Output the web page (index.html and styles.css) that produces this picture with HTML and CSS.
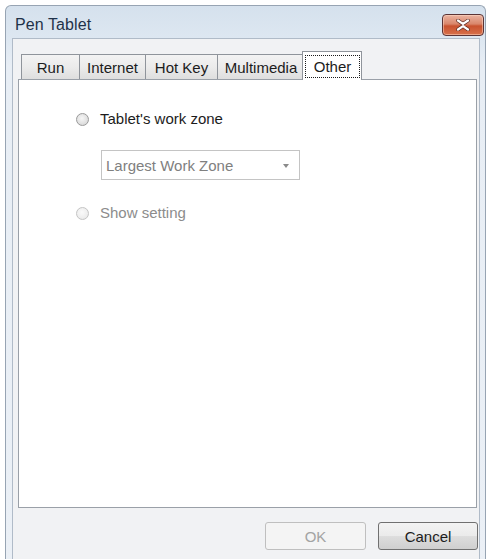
FILE: index.html
```html
<!DOCTYPE html>
<html lang="en">
<head>
<meta charset="utf-8">
<title>Pen Tablet</title>
<link rel="stylesheet" href="styles.css">
</head>
<body>
<div class="window">
  <div class="titlebar">
    <span class="title">Pen Tablet</span>
    <button class="close" aria-label="Close">
      <svg width="16" height="12" viewBox="0 0 16 12">
        <path d="M3 1.5 L8 5 L13 1.5 M3 10.5 L8 7 L13 10.5" fill="none" stroke="#5a2a22" stroke-width="3.6" stroke-linecap="round"/>
        <path d="M3 1.5 L8 5 L13 1.5 M3 10.5 L8 7 L13 10.5" fill="none" stroke="#ffffff" stroke-width="2.2" stroke-linecap="round"/>
      </svg>
    </button>
  </div>
  <div class="frame">
    <div class="client">
      <div class="tabs">
        <div class="tab tab-run">Run</div>
        <div class="tab tab-internet">Internet</div>
        <div class="tab tab-hotkey">Hot Key</div>
        <div class="tab tab-multimedia">Multimedia</div>
        <div class="tab tab-other active"><span class="focus">Other</span></div>
      </div>
      <div class="panel">
        <div class="option">
          <span class="radio"></span>
          <span class="label">Tablet's work zone</span>
        </div>
        <div class="select">
          <span class="select-text">Largest Work Zone</span>
          <span class="arrow"></span>
        </div>
        <div class="option option-disabled">
          <span class="radio"></span>
          <span class="label">Show setting</span>
        </div>
      </div>
      <div class="buttons">
        <button class="btn btn-disabled">OK</button>
        <button class="btn">Cancel</button>
      </div>
    </div>
  </div>
</div>
</body>
</html>
```
FILE: styles.css
```css
html, body {
  margin: 0;
  padding: 0;
  background: #ffffff;
  height: 559px;
  overflow: hidden;
}

body {
  font-family: "Liberation Sans", Arial, sans-serif;
  font-size: 15px;
  color: #1c1c1c;
}

/* window chrome */
.window {
  margin: 5px 4px 0 5px;
  height: 580px;
  border: 1px solid #97a4b3;
  border-bottom: none;
  border-radius: 6px 6px 0 0;
  background: linear-gradient(to bottom, #d5e1ed 0px, #dde7f1 32px, #e8eef5 60px, #ebf0f6 100%);
  display: flex;
  flex-direction: column;
}

.titlebar {
  height: 32px;
  display: flex;
  align-items: flex-start;
  justify-content: space-between;
  padding: 0 1px 0 9px;
  flex: none;
}

.title {
  margin-top: 9px;
  line-height: 20px;
  font-size: 16px;
  color: #1f3249;
  letter-spacing: 0.1px;
}

.close {
  margin-top: 8px;
  width: 42px;
  height: 22px;
  padding: 0;
  border: 1px solid #5b3436;
  border-radius: 4px;
  background: linear-gradient(to bottom, #ebb4a2 0%, #d9866b 45%, #c9522f 55%, #d7714c 100%);
  box-shadow: inset 0 0 0 1px rgba(255, 220, 200, 0.5);
  display: flex;
  align-items: center;
  justify-content: center;
}

.frame {
  flex: 1;
  padding: 0 5px 0 6px;
  display: flex;
}

.client {
  flex: 1;
  border: 1px solid #b0bbc8;
  border-bottom: none;
  background: #f1f2f4;
  padding: 12px 2px 0 5px;
  display: flex;
  flex-direction: column;
}

/* tab strip */
.tabs {
  display: flex;
  align-items: flex-end;
  height: 28px;
  padding-left: 3px;
  position: relative;
  z-index: 1;
}

.tab {
  height: 25px;
  box-sizing: border-box;
  border: 1px solid #8f949b;
  border-bottom: none;
  background: linear-gradient(to bottom, #f3f3f3 0%, #ebebeb 50%, #dedede 100%);
  display: flex;
  align-items: center;
  justify-content: center;
  padding-top: 1px;
  color: #1c1c1c;
}

.tab + .tab { margin-left: -1px; }

.tab-run { width: 59px; }
.tab-internet { width: 67px; }
.tab-hotkey { width: 73px; }
.tab-multimedia { width: 88px; }

.tab.active {
  margin-left: -3px;
  width: 60px;
  height: 29px;
  margin-bottom: -1px;
  background: #ffffff;
  padding: 3px 1px 2px 2px;
  align-items: stretch;
  position: relative;
}

.focus {
  flex: 1;
  border: 1px dotted #1a1a1a;
  display: flex;
  align-items: center;
  justify-content: center;
}

/* tab page */
.panel {
  height: 429px;
  box-sizing: border-box;
  border: 1px solid #9aa0a8;
  background: #ffffff;
  display: flex;
  flex-direction: column;
  align-items: flex-start;
}

.option {
  display: flex;
  align-items: center;
  gap: 11px;
  margin-left: 57px;
  margin-top: 30px;
  line-height: 18px;
}

.radio {
  width: 13px;
  height: 13px;
  box-sizing: border-box;
  border-radius: 50%;
  border: 1px solid #9a9a9a;
  background: radial-gradient(circle at 45% 40%, #f6f6f6 0%, #e2e2e2 55%, #cfcfcf 100%);
}

.option-disabled {
  margin-top: 24px;
  color: #8c8c8c;
}

.option-disabled .radio {
  border-color: #c4c4c4;
  background: radial-gradient(circle at 45% 40%, #fafafa 0%, #eeeeee 60%, #e2e2e2 100%);
}

.select {
  margin-left: 82px;
  margin-top: 22px;
  width: 199px;
  height: 30px;
  box-sizing: border-box;
  border: 1px solid #c4c4c4;
  background: #ffffff;
  display: flex;
  align-items: center;
  justify-content: space-between;
  padding: 0 10px 0 4px;
  color: #808080;
}

.arrow {
  width: 0;
  height: 0;
  border-left: 3.5px solid transparent;
  border-right: 3.5px solid transparent;
  border-top: 4px solid #8a8a8a;
  margin-top: 1px;
}

/* dialog buttons */
.buttons {
  display: flex;
  justify-content: flex-end;
  gap: 12px;
  margin-top: 14px;
  margin-right: -1px;
}

.btn {
  width: 100px;
  height: 28px;
  box-sizing: border-box;
  border: 1px solid #707070;
  border-radius: 3px;
  background: linear-gradient(to bottom, #f3f3f3 0%, #ebebeb 48%, #dddddd 52%, #cfcfcf 100%);
  font-family: "Liberation Sans", Arial, sans-serif;
  font-size: 15px;
  color: #1c1c1c;
  padding: 0;
}

.btn-disabled {
  width: 101px;
  border-color: #bfbfbf;
  background: #f4f4f4;
  color: #a3a3a3;
}
```
